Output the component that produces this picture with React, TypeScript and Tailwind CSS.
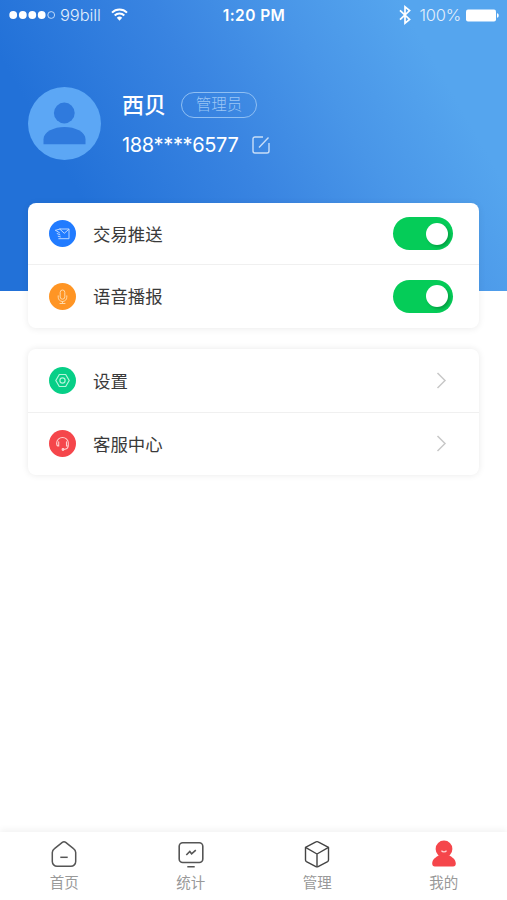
import { useState } from "react";
import type { ReactNode } from "react";
import clsx from "clsx";

function StatusBar() {
  return (
    <div className="grid h-[30px] grid-cols-3 items-center pl-[9px] pr-[8px] text-[#e3effc]">
      <div className="flex items-center">
        <svg width="47" height="10" viewBox="0 0 47 10" fill="white">
          <circle cx="4.2" cy="5" r="3.9" />
          <circle cx="13.8" cy="5" r="3.9" />
          <circle cx="23.3" cy="5" r="3.9" />
          <circle cx="32.7" cy="5" r="3.9" />
          <circle cx="42.2" cy="5" r="3.4" fill="none" stroke="#cfe3fa" strokeWidth="0.9" />
        </svg>
        <span className="ml-[4px] w-[43px] whitespace-nowrap text-[16.5px] font-light leading-none tracking-[-0.1px]">99bill</span>
        <svg className="mb-[2px] ml-[8px]" width="17" height="13" viewBox="0 0 17 13" fill="none" stroke="white" strokeWidth="2">
          <path d="M1 4.6a10.6 10.6 0 0 1 15 0" />
          <path d="M3.7 7.5a6.8 6.8 0 0 1 9.6 0" />
          <path d="M8.5 12.7 5.8 9.8a3.8 3.8 0 0 1 5.4 0z" fill="white" stroke="none" />
        </svg>
      </div>
      <div className="mt-[2px] whitespace-nowrap text-center text-[15.5px] font-semibold leading-none tracking-[0.45px] text-white">1:20 PM</div>
      <div className="flex items-center justify-end">
        <svg width="12" height="20" viewBox="0 0 12 20" fill="none" stroke="white" strokeWidth="1.7">
          <path d="m1 5.3 9.6 9.1L6 18.2V1.800l4.600 3.800L1 14.700" />
        </svg>
        <span className="ml-[8px] whitespace-nowrap text-[16.5px] font-light leading-none tracking-[-0.2px]">100%</span>
        <svg className="ml-[4px]" width="34" height="13" viewBox="0 0 34 13" fill="white">
          <rect x="1" y="0.5" width="30" height="12" rx="2" />
          <path d="M32 4.2c2.300.5 2.300 4.100 0 4.600z" />
        </svg>
      </div>
    </div>
  );
}

function Profile() {
  return (
    <div className="flex pl-[28px] pt-[57px]">
      <svg width="73" height="73" viewBox="0 0 73 73">
        <circle cx="36.5" cy="36.5" r="36.5" fill="#5ca7f5" />
        <circle cx="36.3" cy="26" r="10.4" fill="#2f7add" />
        <path d="M15.5 57.3v-5C15.5 44.8 26 40 36.5 40s21 4.8 21 12.3v5z" fill="#2f7add" />
      </svg>
      <div className="ml-[21px] flex flex-col">
        <div className="flex h-[36px] items-center">
          <h1 className="w-[45px] whitespace-nowrap text-[22px] font-medium leading-none text-white">西贝</h1>
          <span className="ml-[14px] flex h-[26px] w-[76px] items-center justify-center rounded-full border border-[#8fbff3] text-[15.5px] font-light leading-none text-[#9bc6f5]">
            管理员
          </span>
        </div>
        <div className="flex h-[44px] items-center">
          <span className="w-[119px] whitespace-nowrap text-[20px] leading-none tracking-[-0.35px] text-white">188****6577</span>
          <svg className="ml-[11px]" width="18" height="18" viewBox="0 0 18 18" fill="none" stroke="#c8def8" strokeWidth="1.4">
            <path d="M11 1H3a2 2 0 0 0-2 2v12a2 2 0 0 0 2 2h12a2 2 0 0 0 2-2V7" />
            <path d="M7 11.5 16.5 1.5" />
          </svg>
        </div>
      </div>
    </div>
  );
}

const PushIcon = () => (
  <svg width="27" height="27" viewBox="0 0 27 27" fill="none" stroke="#bcd8ff" strokeWidth="1" strokeLinecap="round" strokeLinejoin="round">
    <path d="M11 9h9v9.700H9.800" />
    <path d="m11 9.300 4.300 4 4.500-4" />
    <path d="M6.500 10.300 11 9M6.800 10.500l3.700 2.300M8.200 13.600l2.800 1.200M9.200 16.300l2.200.6" />
  </svg>
);

const MicIcon = () => (
  <svg width="27" height="27" viewBox="0 0 27 27" fill="none" stroke="#ffd9a8" strokeWidth="1">
    <rect x="11.2" y="7" width="4.6" height="9.2" rx="2.3" />
    <path d="M9.2 12.8v1.400a4.300 4.300 0 0 0 8.600 0v-1.400M13.500 18.600v1.900M11 20.500h5" strokeLinecap="round" />
  </svg>
);

const SettingsIcon = () => (
  <svg width="27" height="27" viewBox="0 0 27 27" fill="none" stroke="#b4f5da" strokeWidth="1.2">
    <path d="M10.3 7.500h6.400l3.500 6-3.500 6h-6.400l-3.500-6z" strokeLinejoin="round" />
    <circle cx="13.5" cy="13.5" r="2.6" />
  </svg>
);

const ServiceIcon = () => (
  <svg width="27" height="27" viewBox="0 0 27 27" fill="none" stroke="#ffcfcd" strokeWidth="1.1" strokeLinecap="round">
    <path d="M7.700 13.500V12.800a5.800 5.300 0 0 1 11.600 0v2.700c0 2-1.700 3.700-4.500 4" />
    <path d="M9.700 11.800v4.200c-1.300 0-2-.8-2-2.300" />
    <path d="M17.500 11.800v4.200h1.300" />
    <circle cx="14" cy="19.500" r="0.9" fill="#ffcfcd" />
  </svg>
);

function Row({ icon, color, label, className, children }: { icon: ReactNode; color: string; label: string; className?: string; children: ReactNode }) {
  return (
    <div className={clsx("flex items-center", className)}>
      <span className={clsx("size-[27px] rounded-full", color)}>{icon}</span>
      <span className="ml-[17px] pt-[2px] text-[17.4px] leading-none text-[#3a3a3a]">{label}</span>
      <div className="ml-auto">{children}</div>
    </div>
  );
}

function Toggle({ label }: { label: string }) {
  const [on, setOn] = useState(true);
  return (
    <button
      role="switch"
      aria-checked={on}
      aria-label={label}
      onClick={() => setOn(!on)}
      className={clsx("flex h-[33px] w-[60px] items-center rounded-full px-[5px]", on ? "justify-end bg-[#05cc58]" : "justify-start bg-gray-300")}
    >
      <span className="size-[22px] rounded-full bg-white shadow-[2px_2px_3px_rgba(0,80,30,0.35)]" />
    </button>
  );
}

const Chevron = () => (
  <svg width="11" height="17" viewBox="0 0 11 17" fill="none" stroke="#c8c8c8" strokeWidth="1.5">
    <path d="m1.5 1 7.500 7.500L1.500 16" />
  </svg>
);

const tabs = [
  {
    label: "首页",
    icon: (
      <svg width="28" height="28" viewBox="0 0 28 28" fill="none" stroke="#555" strokeWidth="1.5">
        <path d="M12.3 2.4 4.5 8.600A5 5 0 0 0 2.300 12.600V21.500a4.800 4.800 0 0 0 4.800 4.800h13.800a4.800 4.800 0 0 0 4.800-4.800V12.600a5 5 0 0 0-2.200-4l-7.800-6.200a2.800 2.800 0 0 0-3.400 0z" />
        <path d="M10.3 17.300h7.400" />
      </svg>
    ),
  },
  {
    label: "统计",
    icon: (
      <svg width="28" height="28" viewBox="0 0 28 28" fill="none" stroke="#555" strokeWidth="1.6">
        <rect x="2.2" y="2.8" width="23.6" height="19.7" rx="3.5" />
        <path d="m9.300 15 3.500-3.500 1.800 2.300 4.200-3.700M10.300 26.800h7.400" />
      </svg>
    ),
  },
  {
    label: "管理",
    icon: (
      <svg width="28" height="28" viewBox="0 0 28 28" fill="none" stroke="#444" strokeWidth="1.4" strokeLinejoin="round">
        <path d="M12.900 1.900 2.500 7.400v12.700a1.800 1.800 0 0 0 .9 1.500l9.500 5a2.200 2.200 0 0 0 2.200 0l9.500-5a1.800 1.800 0 0 0 .9-1.500V7.400L15.100 1.900a2.200 2.200 0 0 0-2.200 0z" />
        <path d="M2.500 7.400 14 14l11.500-6.600M14 14v12.800" />
      </svg>
    ),
  },
  {
    label: "我的",
    icon: (
      <svg width="28" height="28" viewBox="0 0 28 28" fill="#f5464b">
        <circle cx="14" cy="9" r="8.4" />
        <path d="M8.800 15.200h10.400c2.200 1.700 6.600 3.600 6.600 8.400 0 1.900-1 2.900-2.700 2.900H4.900c-1.700 0-2.700-1-2.700-2.900 0-4.800 4.400-6.700 6.600-8.400z" />
        <path d="M11.500 10.700c1.100 1.600 3.900 1.600 5 0" fill="none" stroke="#ffd4d4" strokeWidth="1.4" />
      </svg>
    ),
  },
];

export default function App() {
  return (
    <div className="flex h-[900px] w-[507px] flex-col overflow-hidden bg-white font-[Inter,'Noto_Sans_CJK_SC',sans-serif]">
      <header className="h-[291px] shrink-0 bg-[linear-gradient(60deg,#2271d8_20%,#3984e1_47%,#4996e8_66%,#55a5ee_84%)]">
        <StatusBar />
        <Profile />
      </header>

      <main className="relative -mt-[88px] flex grow flex-col gap-[21px] px-[28px]">
        <section className="h-[125px] rounded-[8px] bg-white shadow-[0_1px_7px_rgba(0,0,0,0.08)]">
          <Row icon={<PushIcon />} color="bg-[#217bff]" label="交易推送" className="h-[62px] border-b border-[#f0f0f0] pl-[21px] pr-[26px]">
            <Toggle label="交易推送" />
          </Row>
          <Row icon={<MicIcon />} color="bg-[#ff9524]" label="语音播报" className="h-[62px] pl-[21px] pr-[26px]">
            <Toggle label="语音播报" />
          </Row>
        </section>

        <section className="h-[126px] rounded-[8px] bg-white shadow-[0_0_7px_rgba(0,0,0,0.09)]">
          <Row icon={<SettingsIcon />} color="bg-[#07cf87]" label="设置" className="h-[64px] border-b border-[#f0f0f0] pl-[21px] pr-[32px]">
            <Chevron />
          </Row>
          <Row icon={<ServiceIcon />} color="bg-[#f5464b]" label="客服中心" className="h-[61px] pl-[21px] pr-[32px]">
            <Chevron />
          </Row>
        </section>
      </main>

      <nav className="grid h-[68px] shrink-0 grid-cols-4 pl-px shadow-[0_-2px_7px_rgba(0,0,0,0.06)]">
        {tabs.map((tab) => (
          <a key={tab.label} className="flex flex-col items-center pt-[8px]">
            {tab.icon}
            <span className="mt-[8px] text-[14.5px] leading-none text-[#999]">{tab.label}</span>
          </a>
        ))}
      </nav>
    </div>
  );
}
